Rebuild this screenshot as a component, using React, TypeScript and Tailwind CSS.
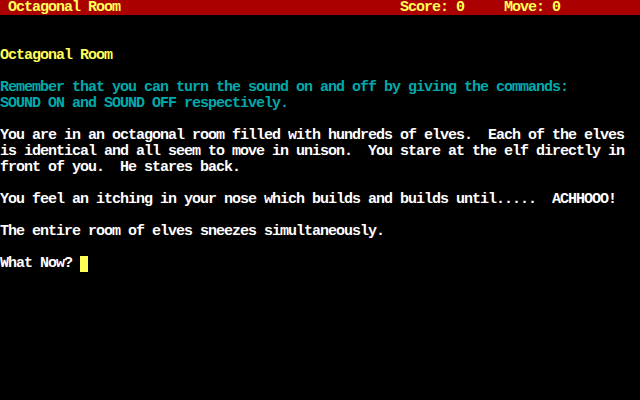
const lines: { text: string; color?: string }[] = [
  { text: "" },
  { text: "" },
  { text: "Octagonal Room", color: "text-[#ffff55]" },
  { text: "" },
  { text: "Remember that you can turn the sound on and off by giving the commands:", color: "text-[#00aaaa]" },
  { text: "SOUND ON and SOUND OFF respectively.", color: "text-[#00aaaa]" },
  { text: "" },
  { text: "You are in an octagonal room filled with hundreds of elves.  Each of the elves" },
  { text: "is identical and all seem to move in unison.  You stare at the elf directly in" },
  { text: "front of you.  He stares back." },
  { text: "" },
  { text: "You feel an itching in your nose which builds and builds until.....  ACHHOOO!" },
  { text: "" },
  { text: "The entire room of elves sneezes simultaneously." },
  { text: "" },
];

const App = () => {
  return (
    <div className="w-[640px] h-[400px] bg-black overflow-hidden font-['Liberation_Mono',monospace] font-bold text-[15px] tracking-[-1px] leading-4 text-white">
      {/* status bar */}
      <div className="h-4 bg-[#aa0000] border-b border-black flex text-[#ffff55] whitespace-pre">
        <span className="w-[400px] pl-2">Octagonal Room</span>
        <span className="w-[104px]">Score: 0</span>
        <span>Move: 0</span>
      </div>

      {lines.map((l, i) => (
        <div key={i} className={`h-4 whitespace-pre ${l.color ?? ""}`}>
          {l.text}
        </div>
      ))}

      <div className="h-4 whitespace-pre flex items-center">
        <span>What Now? </span>
        <span className="w-2 h-4 bg-[#ffff55]" />
      </div>
    </div>
  );
};

export default App;
